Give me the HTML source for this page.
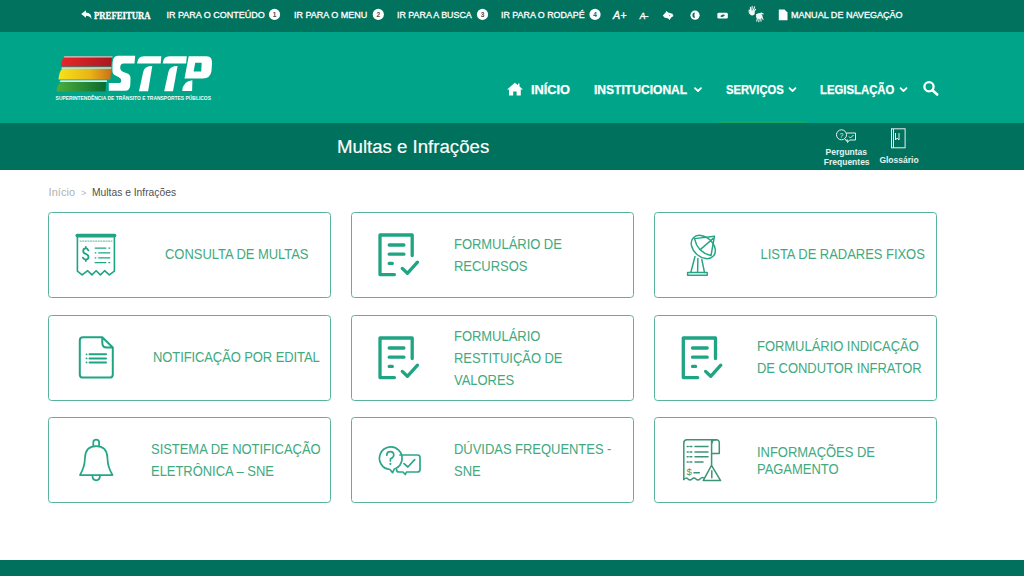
<!DOCTYPE html>
<html><head><meta charset="utf-8">
<style>
*{margin:0;padding:0;box-sizing:border-box}
html,body{width:1024px;height:576px;overflow:hidden;background:#fff;font-family:"Liberation Sans",sans-serif}
.abs{position:absolute}
#top{position:absolute;left:0;top:0;width:1024px;height:32px;background:#00725e}
#hdr{position:absolute;left:0;top:32px;width:1024px;height:91px;background:#00a589}
#tbar{position:absolute;left:0;top:123px;width:1024px;height:47px;background:#00715d}
#foot{position:absolute;left:0;top:560px;width:1024px;height:16px;background:#01715e}
.tt{position:absolute;color:#fff;font-size:9px;-webkit-text-stroke:.3px #fff;line-height:1;white-space:nowrap;transform-origin:0 0}
.nav{position:absolute;color:#fff;font-size:12px;font-weight:bold;-webkit-text-stroke:.25px #fff;line-height:1;white-space:nowrap;transform-origin:0 0}
.card{position:absolute;width:283px;height:86px;border:1.5px solid #58b39a;border-radius:3.5px;background:#fff}
.ct{position:absolute;color:#42a980;font-size:13px;line-height:20.46px;white-space:nowrap;letter-spacing:-0.04px;transform:scaleY(1.08);transform-origin:0 0}
</style></head><body>
<div id="top"></div>
<div id="hdr"></div>
<div id="tbar"></div>
<div id="foot"></div>

<!-- top bar text -->
<div class="tt" style="left:93.6px;top:10.6px;font-size:10px;font-family:'Liberation Serif',serif;font-weight:bold;transform:scaleX(.87)">PREFEITURA</div>
<div class="tt" style="left:166.5px;top:11px">IR PARA O CONTEÚDO</div>
<div class="tt" style="left:294px;top:11px">IR PARA O MENU</div>
<div class="tt" style="left:397.2px;top:11px;transform:scaleX(.985)">IR PARA A BUSCA</div>
<div class="tt" style="left:501.4px;top:11px;transform:scaleX(.985)">IR PARA O RODAPÉ</div>
<div class="tt" style="left:791.1px;top:11px;transform:scaleX(1.005)">MANUAL DE NAVEGAÇÃO</div>
<!-- nav -->
<div class="nav" style="left:530.8px;top:84.1px;transform:scaleX(1.065)">INÍCIO</div>
<div class="nav" style="left:594.3px;top:84.1px;transform:scaleX(1.006)">INSTITUCIONAL</div>
<div class="nav" style="left:725.5px;top:84.1px;transform:scaleX(.935)">SERVIÇOS</div>
<div class="nav" style="left:819.7px;top:84.1px;transform:scaleX(.945)">LEGISLAÇÃO</div>

<!-- title -->
<div class="abs" style="left:337.3px;top:138.1px;color:#fff;font-size:18px;-webkit-text-stroke:.15px #fff;line-height:1;white-space:nowrap;transform:scaleX(1.035);transform-origin:0 0">Multas e Infrações</div>

<!-- breadcrumb -->
<div class="abs" style="left:48.5px;top:186.8px;font-size:11px;line-height:1;white-space:nowrap;color:#b2b2b2;letter-spacing:.08px">Início</div>
<div class="abs" style="left:81.2px;top:188.6px;font-size:8.5px;line-height:1;white-space:nowrap;color:#b4b4b4">&gt;</div>
<div class="abs" style="left:91.6px;top:186.8px;font-size:11px;line-height:1;white-space:nowrap;color:#505050;transform:scaleX(.935);transform-origin:0 0">Multas e Infrações</div>
<div class="abs" style="left:719px;top:120.6px;width:87px;height:2.4px;background:#12a864"></div>
<!-- cards -->
<div class="card" style="left:47.5px;top:212px"></div>
<div class="card" style="left:350.8px;top:212px"></div>
<div class="card" style="left:654px;top:212px"></div>
<div class="card" style="left:47.5px;top:314.6px"></div>
<div class="card" style="left:350.8px;top:314.6px"></div>
<div class="card" style="left:654px;top:314.6px"></div>
<div class="card" style="left:47.5px;top:417.2px"></div>
<div class="card" style="left:350.8px;top:417.2px"></div>
<div class="card" style="left:654px;top:417.2px"></div>

<div class="ct" style="left:165px;top:243.84px">CONSULTA DE MULTAS</div>
<div class="ct" style="left:454px;top:233.54px">FORMULÁRIO DE<br>RECURSOS</div>
<div class="ct" style="left:760.5px;top:243.84px">LISTA DE RADARES FIXOS</div>
<div class="ct" style="left:153px;top:346.94px;letter-spacing:-0.1px">NOTIFICAÇÃO POR EDITAL</div>
<div class="ct" style="left:454px;top:325.84px">FORMULÁRIO<br>RESTITUIÇÃO DE<br>VALORES</div>
<div class="ct" style="left:757px;top:336.14px">FORMULÁRIO INDICAÇÃO<br>DE CONDUTOR INFRATOR</div>
<div class="ct" style="left:151px;top:438.74px">SISTEMA DE NOTIFICAÇÃO<br>ELETRÔNICA – SNE</div>
<div class="ct" style="left:454px;top:438.74px">DÚVIDAS FREQUENTES -<br>SNE</div>
<div class="ct" style="left:757px;top:444.19px;line-height:15.74px">INFORMAÇÕES DE<br>PAGAMENTO</div>


<svg class="abs" style="left:0;top:0" width="1024" height="576" viewBox="0 0 1024 576">
<defs>
<linearGradient id="gr" x1="0" x2="1"><stop offset="0" stop-color="#e8262a"/><stop offset="1" stop-color="#a8191f"/></linearGradient>
<linearGradient id="gy" x1="0" x2="1"><stop offset="0" stop-color="#f7e21a"/><stop offset=".6" stop-color="#e8b415"/><stop offset="1" stop-color="#c9701c"/></linearGradient>
<linearGradient id="gg" x1="0" x2="1"><stop offset="0" stop-color="#4caf3c"/><stop offset="1" stop-color="#0b6a2f"/></linearGradient>
</defs>
<!-- logo stripes -->
<g>
<path d="M64.5,56.5 L112.2,56.5 L110.9,66.5 L61,66.5 Q61.5,59 64.5,56.5Z" fill="url(#gr)"/>
<path d="M62.5,68.5 L111.6,68.5 L110.3,79.5 L58.5,79.5 Q59,71.5 62.5,68.5Z" fill="url(#gy)"/>
<path d="M61,82 L106,82 L105.5,91.5 L56.5,91.5 Q57,84.5 61,82Z" fill="url(#gg)"/>
<path d="M64.5,56.2 L112.5,56.2 L112.3,57.6 L63.5,57.6Z" fill="#ffffff" opacity=".7"/>
<path d="M62,67.2 L111.5,67.2 L111.3,68.8 L61,68.8Z" fill="#ffffff" opacity=".75"/>
<path d="M60.5,80.3 L107,80.3 L106.8,82 L59.5,82Z" fill="#ffffff" opacity=".8"/>
</g>
<!-- STTP -->
<g transform="translate(100,50)" fill="#fff">
<path d="M18,5.8 L35.2,5.8 L34.5,13.4 L23.6,13.4 Q20.3,13.6 20.2,17.4 Q20.2,20.6 23.4,22 L27.5,23.6 Q30.6,25 30.5,28.6 L30.3,34.5 Q30.1,40.8 25,40.8 L8.8,40.8 L8.8,32.9 L19.6,32.9 Q21.4,32.8 21.3,30.6 Q21.2,28.2 18.5,27 L15,25.3 Q12.3,24 12.4,19.5 L12.5,13.5 Q12.6,5.8 18,5.8 Z"/>
<path d="M37.1,13.5 Q37.6,6.2 44,6.2 L61.3,6.2 L60.7,13.5 Z"/><path d="M52.3,16.1 L48.1,41.2 L39,41.2 L43.2,21.9 Q44.5,16.1 52.3,16.1 Z"/>
<path d="M62.7,13.5 Q63.2,6.2 69.5,6.2 L86.8,6.2 L86.1,13.5 Z"/><path d="M77.6,16.1 L73,41.2 L64.2,41.2 L68.4,21.9 Q69.7,16.1 77.6,16.1 Z"/>
<path fill-rule="evenodd" d="M88.7,6.2 L106.6,6.2 Q112.5,6.2 112,13.5 L111.5,21 Q110.5,28.4 102.8,28.4 L84.5,28.4Z M95.2,12.7 L101.7,12.7 L101.2,21.5 L93.6,21.5Z"/>
<path d="M82.2,41 Q83,31 92.4,30.3 L92.1,41Z"/>
</g>
<text x="55.6" y="100.4" font-family="Liberation Sans" font-weight="bold" font-size="5.4" fill="#f4fbf9" textLength="155.4" lengthAdjust="spacingAndGlyphs">SUPERINTENDÊNCIA DE TRÂNSITO E TRANSPORTES PÚBLICOS</text>

<!-- card icons -->
<g fill="none" stroke="#1fa484" stroke-linecap="round" stroke-linejoin="round">
 <!-- receipt -->
 <path d="M77.4,237 L77.4,271.2 L82.1,274.9 L87.7,270.7 L91.9,274.9 L96.1,270.7 L100.4,274.9 L104.6,270.7 L109.3,274.9 L114.4,271.2 L114.4,237" stroke-width="1.6"/>
 <path d="M77.2,235.6 L114.6,235.6" stroke-width="3.6"/>
 <path d="M80,241.1 L112,241.1" stroke-width="0.8" stroke-dasharray="1.2 1.4"/>
 <path d="M94.7,248.2 L106.3,248.2 M108.4,248.2 L110.2,248.2 M94.7,252.9 L96.3,252.9 M98.2,252.9 L110.2,252.9 M94.7,257.8 L96.3,257.8 M98.2,257.8 L110.2,257.8 M94.7,262.7 L106.3,262.7 M108.4,262.7 L110.2,262.7" stroke-width="1.3" stroke-linecap="butt"/>
 <path d="M88.3,250.3 Q87.5,248.4 85.7,248.4 Q83.2,248.4 83.2,250.9 Q83.2,253.2 85.8,253.9 Q88.5,254.7 88.5,257.1 Q88.5,259.6 85.8,259.6 Q83.7,259.6 82.9,257.7 M85.8,246.8 L85.8,248.4 M85.8,259.6 L85.8,261" stroke-width="1.8"/>
 <!-- form check -->
 <g id="fc"><path d="M394.4,274.6 L380,274.6 L380,235 L412.2,235 L412.2,255.6" stroke-width="3.3"/>
 <path d="M389.2,245 L403.9,245 M389.2,254.2 L403.9,254.2 M389.2,263.4 L392.3,263.4" stroke-width="3.3"/>
 <path d="M402.3,268.4 L407.4,273.3 L417.5,262.2" stroke-width="3.3"/></g>
 <use href="#fc" transform="translate(0,103)"/>
 <use href="#fc" transform="translate(303.3,103)"/>
 <!-- satellite dish -->
 <g stroke-width="1.45" stroke="#26a586">
 <ellipse cx="703.3" cy="247" rx="13.6" ry="9.8" transform="rotate(42 703.3 247)"/>
 <path d="M694.5,238.6 L714.5,236.2 L711,255.5 M700.5,249.4 L713,238.6 M694.5,238.6 Q697.5,252.5 711,255.5"/>
 <path d="M695,256.5 L690.8,272.5 M697.9,258.5 L697.6,272.5 M701.8,259.5 L704.5,272.5"/>
 <rect x="687.6" y="272.5" width="19.6" height="2.8" stroke-width="1.5"/>
 </g>
 <!-- document -->
 <path d="M102.3,337.3 L83,337.3 Q79.8,337.3 79.8,340.5 L79.8,374.4 Q79.8,377.6 83,377.6 L109.6,377.6 Q112.8,377.6 112.8,374.4 L112.8,347.5 Z M102.3,337.3 L102.3,343 Q102.3,347.5 106.8,347.5 L112.8,347.5" stroke-width="2"/>
 <path d="M89.5,354.3 L106,354.3 M89.5,358.4 L106,358.4 M89.5,362.4 L106,362.4" stroke-width="2"/>
 <path d="M86.5,354.3 L86.6,354.3 M86.5,358.4 L86.6,358.4 M86.5,362.4 L86.6,362.4" stroke-width="1.8"/>
 <!-- bell -->
 <g stroke-width="1.75" stroke="#25a687">
 <path d="M80,475 Q84.6,467 84.8,460 L85,457.5 Q85.6,446.2 96.2,446.2 Q106.8,446.2 107.4,457.5 L107.6,460 Q107.8,467 112.5,475 Z"/>
 <path d="M93.3,446 L93.3,442.4 Q93.3,439.6 96.2,439.6 Q99.1,439.6 99.1,442.4 L99.1,446"/>
 <path d="M92.4,475.3 Q92.4,480.3 96.2,480.3 Q100,480.3 100,475.3"/>
 </g>
 <!-- chat bubbles -->
 <g stroke-width="1.7" stroke="#2ca689">
 <path d="M395.7,468.4 A11.3,11.3 0 1 0 389.9,469.5 L392.6,472.6 L394.3,469"/>
 <path d="M400,455 L417.5,455 Q420,455 420,457.5 L420,469.5 Q420,472 417.5,472 L406.5,472 L405.3,474.5 L403,472 L398.8,472 Q396.5,472 396.5,469.5"/>
 <path d="M404,463.6 L407.9,467 L414.7,459.7"/>
 <path d="M386.8,455.2 Q386.8,451.6 390.3,451.6 Q393.8,451.6 393.8,455 Q393.8,457.3 390.5,458.8 L390.4,461"/>
 <path d="M390.4,463.8 L390.4,464" stroke-width="2"/>
 </g>
 <!-- invoice warning -->
 <g stroke="#3c9478" stroke-width="1.5">
 <path d="M683.8,479.5 L683.8,443 Q683.8,439.8 687,439.8 L716,439.8"/>
 <path d="M711.6,440.5 L711.6,465"/>
 <path d="M712,453.4 L719.3,453.4 L719.3,443 Q719.3,439.8 716,439.8 Q712,439.8 712,443"/>
 <path d="M683.8,479.5 Q686,477 688,479 Q690,481 692,479 Q694,477 696,479 Q698,481 700,479 Q702,477 703.5,477.8"/>
 <path d="M703.2,480.6 L711.5,465.3 L720.6,480.6 Z"/>
 <path d="M711.8,470.8 L711.8,477.8"/>
 <path d="M687.2,446.5 L688.2,446.5 M690,446.5 L691.8,446.5 M695,446.5 L708,446.5 M687.2,451.9 L688.2,451.9 M690,451.9 L691.8,451.9 M695,451.9 L708,451.9 M687.2,456.8 L688.2,456.8 M690,456.8 L691.8,456.8 M695,456.8 L708,456.8 M687.2,462.1 L688.2,462.1 M690,462.1 L691.8,462.1 M695,462.1 L703,462.1" stroke-width="1.5"/>
 <path d="M694,472.8 L699.3,472.8"/>
 <text x="686.5" y="475" font-family="Liberation Sans" font-size="9.5" fill="#3c9478" stroke="none">$</text>
 </g>
</g>
</svg>


<svg class="abs" style="left:0;top:0" width="1024" height="176" viewBox="0 0 1024 176">
<g fill="#fff">
 <!-- reply arrow -->
 <path d="M81.2,14 L86,10.3 L86,12.5 Q91.6,12.7 91.5,19 Q89.6,15.9 86,15.8 L86,17.7 Z"/>
 <!-- badges -->
 <circle cx="274.5" cy="14.4" r="5.6"/><path d="M640.5,16.6 L648.6,16.6" stroke="#fff" stroke-width="1"/>
 <circle cx="378.3" cy="14.4" r="5.6"/>
 <circle cx="482.5" cy="14.4" r="5.6"/>
 <circle cx="595" cy="14.4" r="5.6"/>
 <!-- megaphone-like -->
 <path d="M662.8,15.6 L665.6,12.6 L666.4,11 L668.2,12.6 L672.4,13.8 L673.5,16 L671.2,17.4 L669.6,20.1 L668.2,18.6 L664.4,17.4 Z"/>
 <!-- contrast -->
 <circle cx="695" cy="15.2" r="4.6"/>
 <!-- repeat -->
 <path d="M718.8,12.8 L726.4,12.8 Q727.8,12.8 727.8,14.2 L727.8,17.2 Q727.8,18.6 726.4,18.6 L718.8,18.6 Q717.4,18.6 717.4,17.2 L717.4,14.2 Q717.4,12.8 718.8,12.8 Z"/>
 <!-- hands -->
 <g fill="#eef7f4" stroke="#eef7f4" stroke-linecap="round" stroke-width="1.1">
 <path d="M750,13.5 Q748.5,12 749.2,10.2 L750.6,11.2 L750.4,7.2 M751.8,10.6 L752.2,6.4 M753.2,10.8 L754.6,6.8 M753.6,12 L755.6,9.4" fill="none"/>
 <ellipse cx="752.2" cy="13" rx="2.6" ry="2.4" stroke="none"/>
 <path d="M756.5,14.5 L761.6,13.2 L763.2,14 M757.6,17.2 L756.8,21.2 M759.2,17.6 L758.8,21.8 M760.6,17.2 L761,21.2 M761.8,16.6 L763,19.4" fill="none"/>
 <ellipse cx="759.2" cy="16.2" rx="3.2" ry="2.7" stroke="none"/>
</g>
 <!-- file -->
 <path d="M778.8,9.6 L784.5,9.6 L787.5,12.6 L787.5,20.2 L778.8,20.2 Z"/>
</g>
<g fill="#4a4a4a" font-family="Liberation Sans" font-weight="bold" font-size="6.5" text-anchor="middle">
 <text x="274.5" y="16.7">1</text><text x="378.3" y="16.7">2</text><text x="482.5" y="16.7">3</text><text x="595" y="16.7">4</text>
</g>
<path d="M695,12.6 A2.6,2.6 0 0 0 695,17.8 Q693.6,15.2 695,12.6 Z" fill="#00725e"/><path d="M669,14.6 L670.6,15.6 L669.2,16.4Z" fill="#00725e" opacity=".6"/>
<ellipse cx="722.6" cy="15.7" rx="2.2" ry="1" transform="rotate(-15 722.6 15.7)" fill="#00725e"/>
<g fill="#fff" stroke="#fff" stroke-width=".35" font-family="Liberation Sans" font-style="italic">
 <text x="613" y="19" font-size="11" textLength="13.4" lengthAdjust="spacingAndGlyphs">A+</text>
 <text x="639.8" y="19" font-size="8.5" textLength="6">A</text>
</g>
<!-- nav icons -->
<path d="M514.8,82.8 L507,89.6 L509,89.6 L509,95.5 L513.2,95.5 L513.2,91.5 L516.6,91.5 L516.6,95.5 L520.8,95.5 L520.8,89.6 L523,89.6 L519.5,86.5 L519.5,83.5 L518,83.5 L518,85.2 Z" fill="#fff"/>
<g fill="none" stroke="#fff" stroke-width="1.8" stroke-linecap="round" stroke-linejoin="round">
 <path d="M695,88.2 L698,91 L701,88.2"/>
 <path d="M789.5,88.2 L792.5,91 L795.5,88.2"/>
 <path d="M900.5,88.2 L903.5,91 L906.5,88.2"/>
 <circle cx="929" cy="86.8" r="4.6" stroke-width="2.3"/>
 <path d="M932.4,90.2 L937.2,94.5" stroke-width="2.6"/>
</g>
<circle cx="957.5" cy="90.8" r="1.6" fill="#0aa66e" opacity=".6"/>
<!-- title bar icons -->
<g fill="none" stroke="#e6f3ef" stroke-width="1">
 <circle cx="841.5" cy="134.8" r="5"/>
 <path d="M845,139 L846.5,141 L848,139.6"/>
 <path d="M846.5,133 L855.5,133 L855.5,140 L849.5,140 L847.5,142.5 L847,140 L846.5,140"/>
 <path d="M849,136.5 L850.5,138 L853.5,135"/>
 <rect x="891.5" y="128.8" width="13.6" height="19" />
 <path d="M893.5,129 L893.5,148 M895.5,133 L895.5,140 L897.2,138 L899,140 L899,133"/>
</g>
<text x="841.5" y="137.5" font-family="Liberation Sans" font-size="7" fill="#e6f3ef" text-anchor="middle">?</text>
<g fill="#e6f3ef" font-family="Liberation Sans" font-weight="bold" font-size="8.5" text-anchor="middle">
 <text x="846.3" y="155">Perguntas</text>
 <text x="846.7" y="164.5">Frequentes</text>
 <text x="899" y="162.5">Glossário</text>
</g>
</svg>

</body></html>
